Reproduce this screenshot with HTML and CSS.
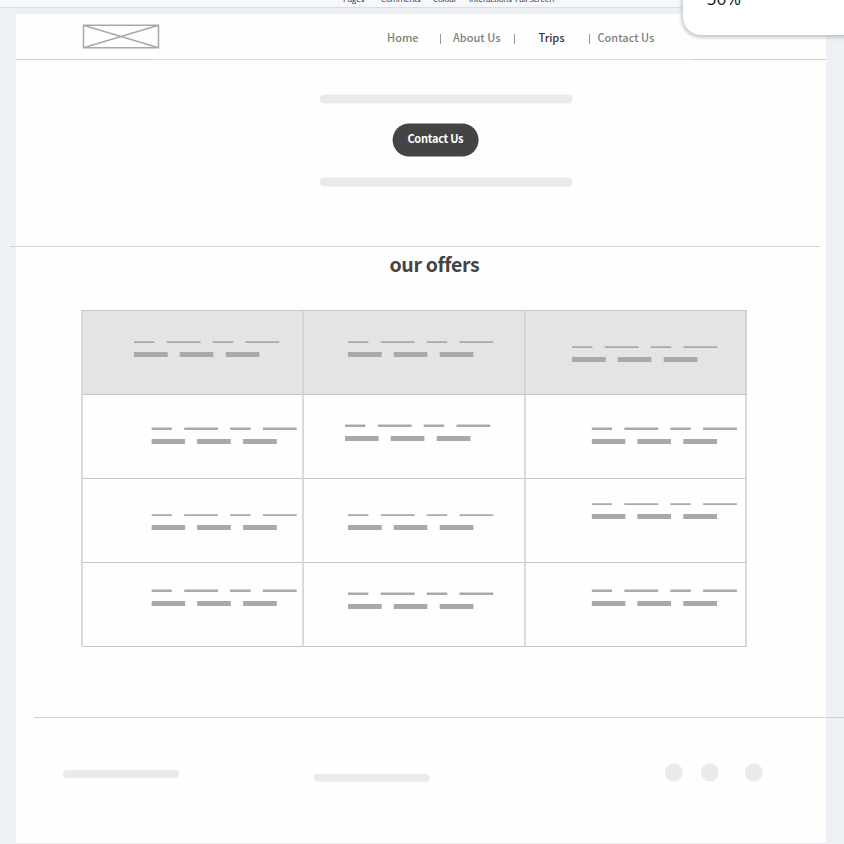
FILE: index.html
```html
<!DOCTYPE html>
<html lang="en">
<head>
<meta charset="utf-8">
<title>Trips wireframe</title>
<link rel="stylesheet" href="styles.css">
</head>
<body>
<svg class="defs" aria-hidden="true">
  <defs>
    <path id="bars" d="M0 12h33.700v5H0zM45.700 12h33.700v5h-33.700zM91.700 12h33.700v5h-33.700z"/>
    <symbol id="thin" viewBox="0 0 146 18"><path d="M0 1.200h20.400V3H0zM32.800 1.200h33.800V3H32.800zM78.700 1.200h20.500V3H78.700zM111.500 1.200h33.800V3h-33.800z"/><use href="#bars"/></symbol>
    <symbol id="thick" viewBox="0 0 146 18"><path d="M0 .6h20.400V3H0zM32.800 .6h33.800V3H32.800zM78.700 .6h20.500V3H78.700zM111.500 .6h33.800V3h-33.800z"/><use href="#bars"/></symbol>
  </defs>
</svg>
<div class="toolbar"><span class="t1">Pages</span><span class="t2">Comments</span><span class="t3">Colour</span><span class="t4">Interactions</span><span class="t5">Full Screen</span></div>
<div class="page">
  <header class="header">
    <svg class="logo" width="78" height="26" viewBox="0 0 78 26"><path d="M1.500 1.200h75v22.500h-75zL76.500 23.700M76.500 1.200L1.500 23.700"/></svg>
    <nav class="nav"><a class="home">Home</a><i></i><a class="about">About Us</a><i></i><a class="trips">Trips</a><i></i><a class="contact">Contact Us</a></nav>
  </header>
  <div class="header-line"></div>
  <section class="hero">
    <div class="bar"></div>
    <button class="button">Contact Us</button>
    <div class="bar"></div>
  </section>
  <div class="rule"></div>
  <h1>our offers</h1>
  <div class="table">
    <div class="cell head c1"><svg><use href="#thin"/></svg></div>
    <div class="cell head c2"><svg><use href="#thin"/></svg></div>
    <div class="cell head c3"><svg><use href="#thin"/></svg></div>
    <div class="cell c4"><svg><use href="#thick"/></svg></div>
    <div class="cell c5"><svg><use href="#thick"/></svg></div>
    <div class="cell c6"><svg><use href="#thick"/></svg></div>
    <div class="cell c7"><svg><use href="#thin"/></svg></div>
    <div class="cell c8"><svg><use href="#thin"/></svg></div>
    <div class="cell c9"><svg><use href="#thin"/></svg></div>
    <div class="cell c10"><svg><use href="#thick"/></svg></div>
    <div class="cell c11"><svg><use href="#thick"/></svg></div>
    <div class="cell c12"><svg><use href="#thick"/></svg></div>
  </div>
  <div class="rule bottom"></div>
  <footer class="footer">
    <div class="pill"></div>
    <div class="pill second"></div>
    <div class="dots"><b></b><b></b><b></b></div>
  </footer>
</div>
<div class="zoom-panel">50%</div>
</body>
</html>
```
FILE: styles.css
```css
* { box-sizing: border-box; }
body {
  margin: 0;
  height: 844px;
  overflow: hidden;
  background: #edf0f5;
  font-family: "Noto Sans CJK SC", "Noto Sans", sans-serif;
  color: #444;
}
.defs { position: absolute; width: 0; height: 0; }
.toolbar {
  display: flex;
  height: 8px;
  padding-left: 343px;
  background: #f5f7fa;
  border-bottom: 1px solid #dcdee4;
  overflow: hidden;
  font: 8px/10px "Open Sans", sans-serif;
  color: #20265c;
  white-space: nowrap;
}
.toolbar span { margin-top: -6px; height: 10px; letter-spacing: -0.15px; }
.t1 { width: 38px; }
.t2 { width: 52px; }
.t3 { width: 36px; }
.t4 { width: 46px; }
.page {
  width: 810px;
  height: 830px;
  margin: 6px 0 0 16px;
  background: #fefefe;
  border-bottom: 1px solid #e9eaec;
}
.header { display: flex; height: 45px; padding-left: 66px; }
.logo { margin-top: 10px; fill: none; stroke: #a8a8a8; stroke-width: 1.5; }
.nav {
  display: flex;
  align-items: center;
  height: 46px;
  margin-left: 227px;
  font-size: 11px;
  font-weight: 500;
  color: #7e7e7e;
  white-space: nowrap;
}
.nav i { width: 1px; height: 10px; margin-top: 4px; background: #999; }
.home { width: 52.500px; }
.about { width: 61px; margin-left: 12.500px; }
.trips { width: 50px; margin-left: 23.500px; color: #333; }
.contact { margin-left: 8px; }
.header-line { height: 1px; background: linear-gradient(to right, #cecece 136px, #dedede 136px 675px, #cecece 675px); }
.hero { height: 186px; padding: 35px 0 0 304px; transform: translate(-0.4px, -0.5px); }
.bar { width: 252.500px; height: 9px; border-radius: 5px; background: #eaeaea; }
.button {
  display: block;
  width: 85.500px;
  height: 33px;
  margin: 20px 0 21px 73px;
  padding: 0 0 6px;
  border: 0;
  border-radius: 17px;
  background: #444;
  color: #fff;
  font: bold 11px/18px "Noto Sans CJK SC", sans-serif;
  letter-spacing: -0.25px;
  white-space: nowrap;
}
.rule { width: 810px; height: 1px; margin-left: -6px; background: #d2d2d2; }
h1 { margin: 0; height: 63px; padding: 2px 0 0 373.500px; font-size: 19.500px; line-height: 30px; letter-spacing: -0.350px; white-space: nowrap; }
.table {
  display: grid;
  grid-template-columns: 221px 222px 221px;
  grid-template-rows: repeat(4, 84px);
  width: 666px;
  margin-left: 65px;
  border-left: 2px solid #dadada;
  border-top: 1px solid #c6c6c6;
}
.cell { border-right: 2px solid #dadada; border-bottom: 1px solid #c6c6c6; overflow: hidden; }
.cell svg { display: block; width: 146px; height: 18px; fill: #a9a9a9; }
.head { background: #e4e4e4; border-right-color: #d4d4d4; }
.c1 { padding: 29px 0 0 51px; }
.c2 { padding: 29px 0 0 44px; }
.c3 { padding: 34px 0 0 46px; }
.c4 { padding: 32px 0 0 69px; }
.c5 { padding: 29px 0 0 41px; }
.c6 { padding: 32px 0 0 66px; }
.c7 { padding: 34px 0 0 69px; }
.c8 { padding: 34px 0 0 44px; }
.c9 { padding: 23px 0 0 66px; }
.c10 { padding: 26px 0 0 69px; }
.c11 { padding: 29px 0 0 44px; }
.c12 { padding: 26px 0 0 66px; }
.c4 svg, .c7 svg, .c10 svg { transform: translateX(-0.6px); }
.c6 svg, .c9 svg, .c12 svg { transform: translateX(-0.4px); }
.rule.bottom { margin: 70px 0 0 18px; }
.footer { display: flex; padding: 52px 0 0 47px; }
.pill { width: 116px; height: 8px; border-radius: 4px; background: #eaeaea; }
.pill.second { margin: 4px 0 0 135px; transform: translate(-0.3px, -0.3px); }
.dots { display: flex; margin: -6px 0 0 235px; transform: translate(-0.2px, -0.4px); }
.dots b { width: 18px; height: 18px; border-radius: 50%; background: #eaeaea; }
.dots b + b { margin-left: 18px; }
.dots b:last-child { margin-left: 26px; }
.zoom-panel {
  position: absolute;
  left: 683px;
  top: -40px;
  width: 200px;
  height: 75px;
  padding: 27px 0 0 23.500px;
  border-radius: 18px;
  background: #fff;
  box-shadow: 0 1px 4px 1px #b5bbbb;
  font: 17.500px/22px "Open Sans", sans-serif;
  color: #111;
}
```
